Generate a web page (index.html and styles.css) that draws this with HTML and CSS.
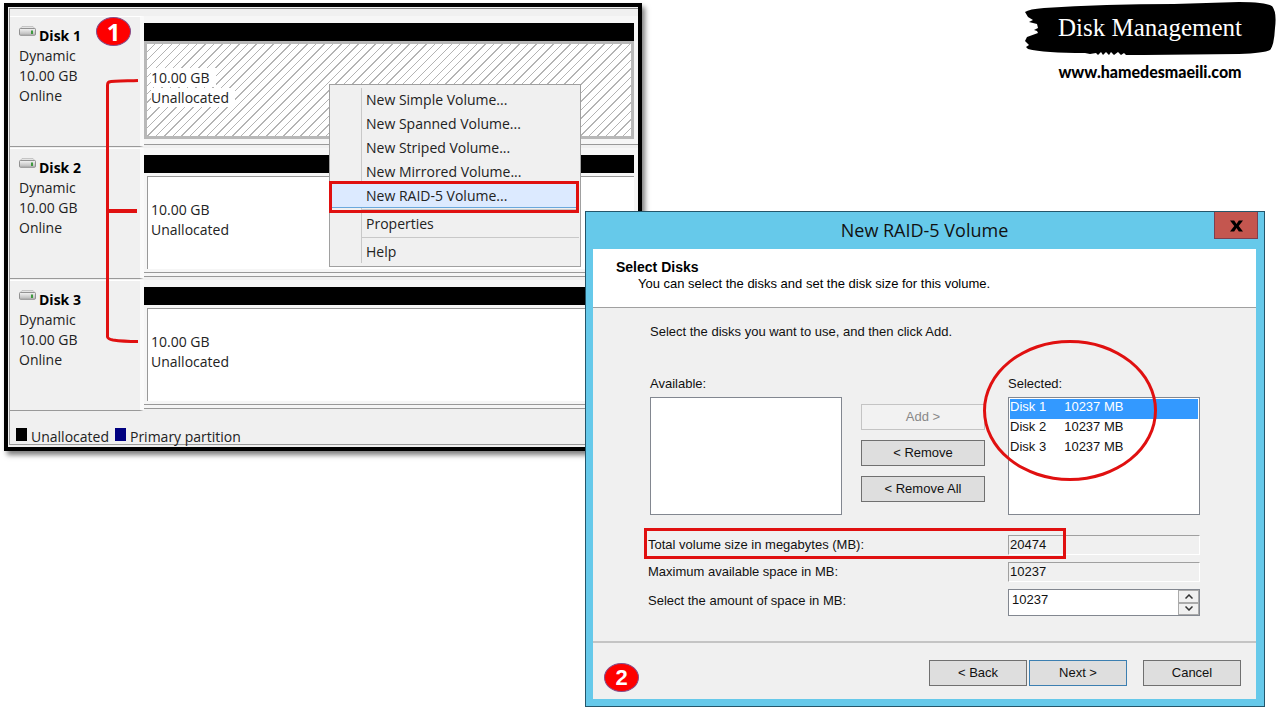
FILE: index.html
```
<!DOCTYPE html>
<html lang="en">
<head>
    <meta charset="UTF-8">
    <meta name="viewport" content="width=device-width, initial-scale=1.0">
    <title>Disk Management</title>
    <link rel="stylesheet" href="styles.css">
</head>
<body>
    <svg class="defs" aria-hidden="true">
        <defs>
            <linearGradient id="metal" x1="0" y1="0" x2="0" y2="1">
                <stop offset="0" stop-color="#f4f4f4"/>
                <stop offset="1" stop-color="#b4b4b4"/>
            </linearGradient>
            <symbol id="drive" viewBox="0 0 17 10">
                <path d="M3 0.500h11l2.200 2.500H0.800z" fill="#e4e4e4" stroke="#bbb" stroke-width="0.800"/>
                <rect x="0.500" y="2.500" width="16" height="6.800" rx="1" fill="url(#metal)" stroke="#888" stroke-width="0.900"/>
                <rect x="12" y="4.500" width="2" height="3.500" fill="#3f9a3f"/>
            </symbol>
        </defs>
    </svg>

    <main class="desktop">
        <section class="manager">
            <div class="disk">
                <div class="disk-info">
                    <h2><svg class="drive"><use href="#drive"/></svg>Disk 1</h2>
                    <p>Dynamic</p>
                    <p>10.00 GB</p>
                    <p>Online</p>
                    <span class="badge step-one">1</span>
                </div>
                <div class="volume selected">
                    <div class="volume-bar"></div>
                    <div class="volume-box"><p><span>10.00 GB</span></p><p><span>Unallocated</span></p></div>
                </div>
            </div>
            <div class="disk">
                <div class="disk-info">
                    <h2><svg class="drive"><use href="#drive"/></svg>Disk 2</h2>
                    <p>Dynamic</p>
                    <p>10.00 GB</p>
                    <p>Online</p>
                </div>
                <div class="volume">
                    <div class="volume-bar"></div>
                    <div class="volume-box"><p><span>10.00 GB</span></p><p><span>Unallocated</span></p></div>
                </div>
            </div>
            <div class="disk">
                <div class="disk-info">
                    <h2><svg class="drive"><use href="#drive"/></svg>Disk 3</h2>
                    <p>Dynamic</p>
                    <p>10.00 GB</p>
                    <p>Online</p>
                </div>
                <div class="volume">
                    <div class="volume-bar"></div>
                    <div class="volume-box"><p><span>10.00 GB</span></p><p><span>Unallocated</span></p></div>
                </div>
            </div>
            <div class="legend">
                <i class="swatch unallocated"></i><span>Unallocated</span>
                <i class="swatch primary"></i><span>Primary partition</span>
            </div>

            <svg class="bracket" viewBox="0 0 34 266" fill="none" stroke="#e01010" stroke-width="3" stroke-linejoin="round">
                <path d="M33 2.5C20 3 8 3 4 4Q2.5 4.500 2.500 8V259Q3 261 8 262Q18 263.500 33 263.500"/>
                <path d="M2.500 133H32" stroke-width="4"/>
            </svg>

            <div class="menu">
                <button type="button">New Simple Volume...</button>
                <button type="button">New Spanned Volume...</button>
                <button type="button">New Striped Volume...</button>
                <button type="button">New Mirrored Volume...</button>
                <button type="button" class="active">New RAID-5 Volume...</button>
                <hr>
                <button type="button">Properties</button>
                <hr>
                <button type="button">Help</button>
            </div>
        </section>

        <header class="brand">
            <svg class="brush" viewBox="0 0 252 54" preserveAspectRatio="none">
                <path d="M1 10Q5 7 20 6Q80 2 150 2L215 0Q240 0 248 4Q253 10 251 26Q250 44 246 48Q240 51 215 52L120 53L102 53L100 51L97 53L94 50L90 53L87 50L85 53L82 50L79 53L77 50L74 53L72 51L66 52L61 51Q20 51 4 47L2 45L5 43L1 39L3 35L14 31L13 29L10 28L14 26L13 22L5 20L9 18L4 15Z"/>
            </svg>
            <h1>Disk Management</h1>
            <a href="#">www.hamedesmaeili.com</a>
        </header>

        <form class="wizard">
            <div class="titlebar">
                <h2>New RAID-5 Volume</h2>
                <button type="button" class="close" aria-label="Close">
                    <svg viewBox="0 0 14 12"><path d="M0 0H4.500L7 3.800L9.500 0H14L9.400 6L14 12H9.500L7 8.200L4.500 12H0L4.600 6Z"/></svg>
                </button>
            </div>
            <div class="client">
                <div class="intro">
                    <h3>Select Disks</h3>
                    <p>You can select the disks and set the disk size for this volume.</p>
                </div>
                <div class="content">
                    <p class="hint">Select the disks you want to use, and then click Add.</p>
                    <div class="picker">
                        <div class="list">
                            <label for="available">Available:</label>
                            <select id="available" size="5" multiple></select>
                        </div>
                        <div class="actions">
                            <button type="button" disabled>Add &gt;</button>
                            <button type="button">&lt; Remove</button>
                            <button type="button">&lt; Remove All</button>
                        </div>
                        <div class="list">
                            <label for="selected">Selected:</label>
                            <select id="selected" size="5" multiple>
                                <option selected>Disk 1 &nbsp; &nbsp; 10237 MB</option>
                                <option>Disk 2 &nbsp; &nbsp; 10237 MB</option>
                                <option>Disk 3 &nbsp; &nbsp; 10237 MB</option>
                            </select>
                            <span class="ring"></span>
                        </div>
                    </div>
                    <div class="field total">
                        <label for="total">Total volume size in megabytes (MB):</label>
                        <input type="text" id="total" value="20474" readonly>
                    </div>
                    <div class="field">
                        <label for="maximum">Maximum available space in MB:</label>
                        <input type="text" id="maximum" value="10237" readonly>
                    </div>
                    <div class="field amount">
                        <label for="amount">Select the amount of space in MB:</label>
                        <div class="spinner">
                            <input type="text" id="amount" value="10237">
                            <div class="arrows">
                                <button type="button" aria-label="Increase"><svg viewBox="0 0 8 5"><path d="M0.500 4.500L4 1L7.500 4.500"/></svg></button>
                                <button type="button" aria-label="Decrease"><svg viewBox="0 0 8 5"><path d="M0.500 0.500L4 4L7.500 0.500"/></svg></button>
                            </div>
                        </div>
                    </div>
                </div>
                <div class="footer">
                    <span class="badge">2</span>
                    <button type="button">&lt; Back</button>
                    <button type="button" class="next">Next &gt;</button>
                    <button type="button" class="cancel">Cancel</button>
                </div>
            </div>
        </form>
    </main>
</body>
</html>
```
FILE: styles.css
```
*, *::before, *::after { box-sizing: border-box; }
body { margin: 0; background: #fff; color: #111; font: 14px/20px "Open Sans", "Noto Sans", sans-serif; }
h1, h2, h3, p { margin: 0; font-size: inherit; }
button, input, select { font: inherit; color: inherit; }
button { padding: 0; }
.defs { position: absolute; width: 0; height: 0; }
.desktop { position: relative; min-height: 100vh; overflow: hidden; }

/* disk list */
.manager { position: absolute; left: 4px; top: 3px; width: calc(50% - 2px); padding: 1px 0 2px 1px; border: 4px solid #000; background: #f0f0f0; box-shadow: 3px 4px 5px rgba(0, 0, 0, .5); color: #222; }
.manager::before { content: ""; display: block; height: 8px; border-top: 1px solid #888; border-left: 1px solid #999; }
.disk { display: grid; grid-template-columns: 134px 1fr; height: 132px; border-left: 1px solid #999; }
.disk-info { position: relative; padding: 9px 0 0 9px; border-top: 1px solid #fff; border-bottom: 1px solid #999; border-right: 4px solid #fafafa; margin-bottom: 1px; }
.disk-info h2 { display: flex; gap: 3px; color: #000; font-weight: 700; }
.drive { width: 17px; height: 10px; }
.volume { margin-bottom: 3px; padding: 7px 4px 0 0; border-bottom: 1px solid #999; background: linear-gradient(#999, #999) 0 calc(100% - 3px) / 100% 1px no-repeat #f6f6f6; }
.volume-bar { height: 18px; background: #000; }
.volume-box { height: 93px; margin: 3px 0 0 3px; padding: 23px 0 0 3px; background: #fff; border-top: 1px solid #999; border-left: 1px solid #999; }
.volume-box span { padding-right: 6px; background: #fff; }
.selected { background: #f6f6f6; }
.selected .volume-box { height: 98px; margin: 0; padding: 24px 0 0 4px; border: 3px solid #b8b8b8; background: repeating-linear-gradient(135deg, #fff 0, #fff 5px, #b4b4b4 5px, #b4b4b4 6px); }
.legend { display: flex; align-items: flex-end; gap: 4px; height: 33px; padding-left: 6px; border-left: 1px solid #999; border-bottom: 1px solid #999; line-height: 14px; }
.legend span { margin-right: 2px; }
.swatch { width: 11px; height: 13px; margin-bottom: 3px; background: #000; }
.primary { background: #000080; }

.badge { display: flex; align-items: center; justify-content: center; width: 35px; height: 29px; border: 1px solid #84508c; border-radius: 50%; background: #fe0000; color: #fff; font: bold 22px/22px "Liberation Sans", sans-serif; }
.step-one { position: absolute; left: 86px; top: 0; font: bold 24px/24px "Open Sans", sans-serif; }
.bracket { position: absolute; left: 97px; top: 71px; width: 34px; height: 266px; }

/* context menu */
.menu { position: absolute; left: 321px; top: 77px; width: 252px; padding: 3px 1px 2px; border: 1px solid #a0a0a0; background: linear-gradient(#c8c8c8, #c8c8c8) 31px 3px / 1px calc(100% - 6px) no-repeat #f0f0f0; }
.menu button { display: block; width: 100%; height: 24px; padding-left: 35px; border: 0; background: none; text-align: left; }
.menu hr { height: 1px; margin: 1px 0 2px 31px; border: 0; background: #c8c8c8; }
.menu .active { position: relative; background: #dceaff; box-shadow: inset 0 -1px #6aa8dc; }
.menu .active::after { content: ""; position: absolute; inset: -3px 0 -5px -2px; border: 3px solid #e01010; }

/* heading in the corner */
.brand { position: absolute; right: 4px; top: 2px; width: 252px; text-align: center; }
.brush { position: absolute; left: 0; top: 0; width: 100%; height: 54px; }
.brand h1 { position: relative; height: 54px; color: #fff; font: 25px/52px "Liberation Serif", serif; }
.brand a { display: block; color: #000; font: 900 16px/32px Lato, sans-serif; text-decoration: none; }

/* wizard */
.wizard { position: absolute; right: 15px; top: 211px; width: calc(53.125%); padding: 0 8px 7px 7px; border: 1px solid #24566b; background: #66c9ea; font: 13px/20px "Liberation Sans", Arial, sans-serif; }
.titlebar { position: relative; height: 37px; }
.titlebar h2 { font: 18px/37px "Open Sans", "Noto Sans", sans-serif; text-align: center; }
.close { position: absolute; right: -2px; top: 0; width: 44px; height: 27px; border: 1px solid #7c4050; border-top: 0; background: #c4564f; }
.close svg { width: 13px; height: 12px; vertical-align: middle; }
.client { background: #f0f0f0; }
.intro { height: 59px; padding: 8px 23px; border-bottom: 1px solid #a0a0a0; background: #fff; color: #000; }
.intro h3 { font-size: 14px; }
.intro p { margin-left: 22px; line-height: 14px; }
.content { height: 333px; padding: 14px 56px 0 57px; }
.hint { margin-bottom: 32px; }
.picker { display: grid; grid-template-columns: 1fr 166px 1fr; }
.list { position: relative; }
.list label { display: block; }
.list select { display: block; width: 100%; height: 118px; margin-top: 3px; padding: 1px; border: 1px solid #828790; border-radius: 0; background: #fff; overflow: hidden; outline: 0; }
.list option { height: 20px; min-height: 20px; padding: 0; line-height: 18px; }
.list option:checked { background: linear-gradient(#3399ff, #3399ff); color: #fff; -webkit-text-fill-color: #fff; }
.ring { position: absolute; left: -25px; top: -34px; width: 174px; height: 141px; border: 3px solid #e01010; border-radius: 50%; pointer-events: none; }
.actions { display: flex; flex-direction: column; gap: 10px; padding: 30px 23px 0 19px; }
.actions button, .footer button { height: 26px; border: 1px solid #707070; background: #dedede; }
.actions button:disabled { border-color: #c4c4c4; background: #f2f2f2; color: #888; }
.field { display: flex; justify-content: space-between; align-items: center; height: 20px; margin: 0 0 7px -2px; }
.field input { width: 192px; height: 20px; padding: 0 1px; border: 1px solid; border-color: #a0a0a0 #fff #fff #a0a0a0; border-radius: 0; background: none; outline: 0; }
.total { position: relative; margin-top: 20px; }
.total::after { content: ""; position: absolute; left: -4px; right: 134px; top: -7px; height: 31px; border: 3px solid #e01010; pointer-events: none; }
.amount { align-items: flex-start; height: 27px; }
.amount label { line-height: 24px; }
.spinner { display: flex; width: 192px; height: 27px; border: 1px solid #828790; background: #fff; }
.spinner input { flex: 1; width: 0; border: 0; padding-left: 3px; }
.arrows { display: flex; flex-direction: column; width: 21px; }
.arrows button { display: flex; align-items: center; justify-content: center; flex: 1; border: 1px solid #aaa; background: #f0f0f0; }
.arrows svg { width: 8px; height: 5px; fill: none; stroke: #333; stroke-width: 1.5; }
.footer { display: flex; align-items: flex-start; height: 58px; padding: 17px 15px 0 11px; border-top: 2px solid #c4c4c4; }
.footer .badge { margin: 3px auto 0 0; }
.footer button { width: 98px; margin-left: 2px; }
.footer .next { border-color: #3c7fb1; }
.footer .cancel { margin-left: 16px; }
```
